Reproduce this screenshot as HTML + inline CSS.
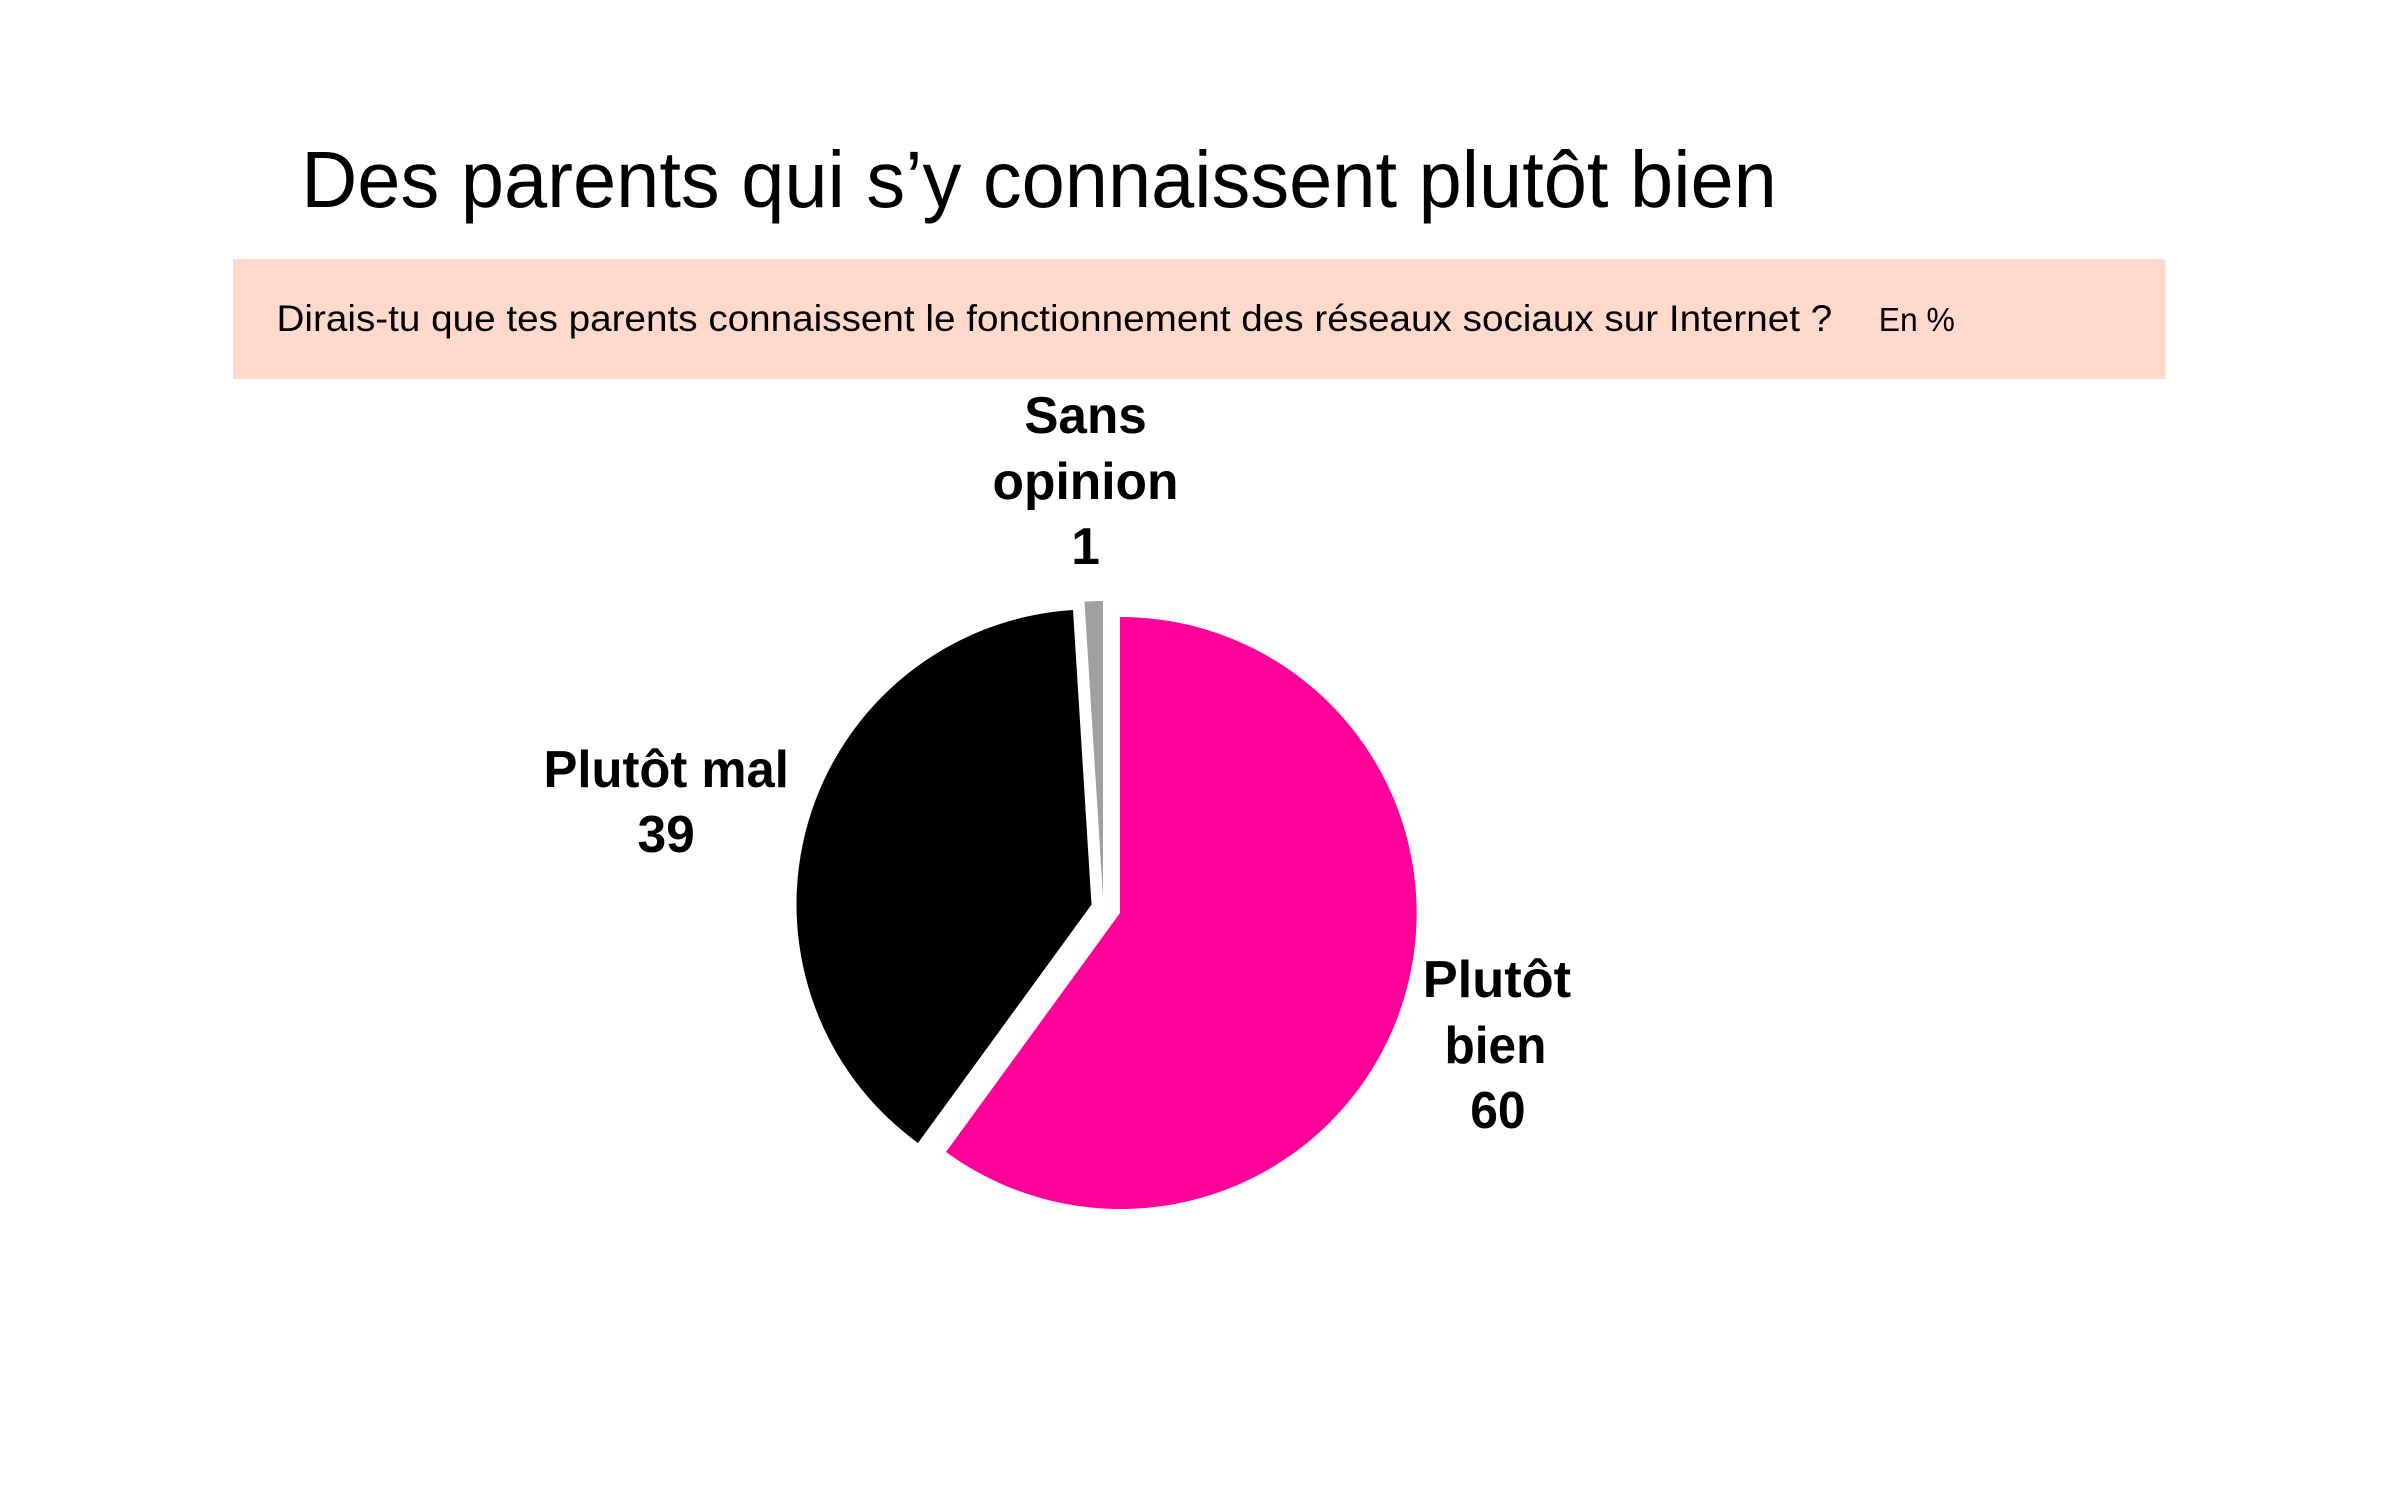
<!DOCTYPE html>
<html><head><meta charset="utf-8"><style>
html,body{margin:0;padding:0;background:#fff;}
svg{display:block;}
</style></head><body>
<svg width="2397" height="1498" viewBox="0 0 2397 1498" xmlns="http://www.w3.org/2000/svg" font-family="'Liberation Sans', Arial, sans-serif">
<rect x="0" y="0" width="2397" height="1498" fill="#fff"/>
<path d="M1120,913 L1120,617 A296,296 0 1 1 946,1152 Z" fill="#FF0099"/>
<path d="M1091.5,904.6 L918,1143 A295,295 0 0 1 1073,610 Z" fill="#000"/>
<path d="M1103,897 L1084.5,601.6 A296,296 0 0 1 1103,601 Z" fill="#A0A0A0"/>
<g transform="translate(2.56,0) scale(0.989,1)">
<text x="302" y="207" font-size="80" textLength="1492" lengthAdjust="spacingAndGlyphs" fill="#000">Des parents qui s’y connaissent plutôt bien</text>
<rect x="233" y="259" width="1954" height="120" fill="#FFD9CC"/>
<text x="277" y="331" font-size="37" textLength="1573" lengthAdjust="spacingAndGlyphs" fill="#000">Dirais-tu que tes parents connaissent le fonctionnement des réseaux sociaux sur Internet ?</text>
<text x="1897" y="331" font-size="33" textLength="77" lengthAdjust="spacingAndGlyphs" fill="#000">En %</text>
<g font-weight="bold" font-size="52" fill="#000">
<text x="1033" y="433" textLength="124" lengthAdjust="spacingAndGlyphs">Sans</text>
<text x="1001" y="499" textLength="188" lengthAdjust="spacingAndGlyphs">opinion</text>
<text x="1095" y="564" text-anchor="middle">1</text>
<text x="547" y="787" textLength="248" lengthAdjust="spacingAndGlyphs">Plutôt mal</text>
<text x="642" y="852" textLength="58" lengthAdjust="spacingAndGlyphs">39</text>
<text x="1436" y="997" textLength="150" lengthAdjust="spacingAndGlyphs">Plutôt</text>
<text x="1458" y="1063" textLength="103" lengthAdjust="spacingAndGlyphs">bien</text>
<text x="1484" y="1128" textLength="56" lengthAdjust="spacingAndGlyphs">60</text>
</g>
</g>
</svg>
</body></html>
